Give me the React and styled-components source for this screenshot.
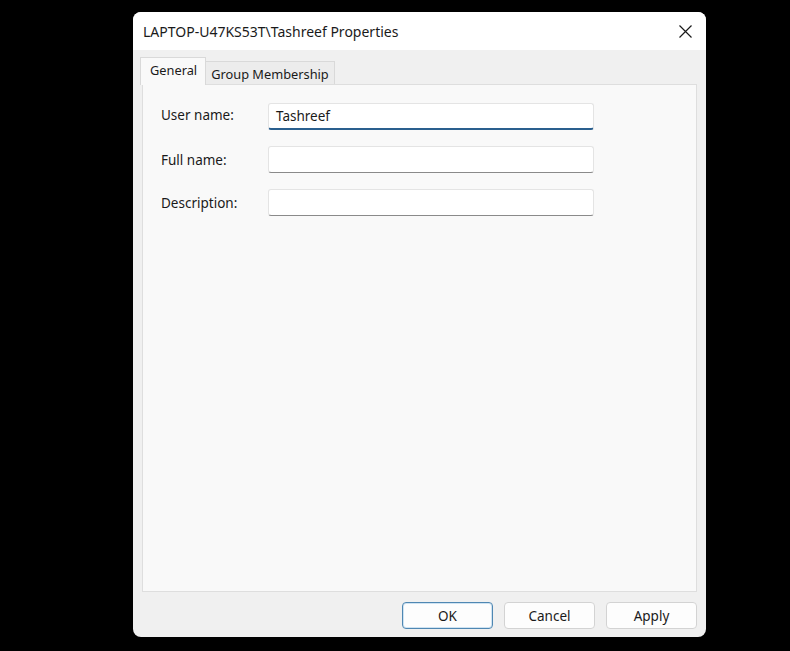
import React from "react";
import styled, { createGlobalStyle } from "styled-components";

const Global = createGlobalStyle`
  html, body { margin: 0; padding: 0; background: #000; }
  body { font-family: "Noto Sans", "Open Sans", sans-serif; color: #1b1b1b; }
  #root { width: 790px; height: 651px; }
`;

const Page = styled.div`
  width: 790px;
  height: 651px;
  background: #000;
  padding: 12px 0 0 133px;
  box-sizing: border-box;
`;

const Window = styled.div`
  width: 573px;
  height: 625px;
  background: #f0f0f0;
  border-radius: 8px;
  overflow: hidden;
  display: flex;
  flex-direction: column;
`;

const TitleBar = styled.div`
  height: 38px;
  background: #ffffff;
  display: flex;
  align-items: center;
  justify-content: space-between;
  padding: 0 0 0 10px;
  box-sizing: border-box;
  font-size: 14px;
  color: #1a1a1a;
`;

const CloseButton = styled.div`
  width: 46px;
  height: 38px;
  display: flex;
  align-items: center;
  justify-content: center;
  margin-right: -2px;
`;

const Body = styled.div`
  flex: 1;
  display: flex;
  flex-direction: column;
  padding: 7px 9px 9px 9px;
`;

const TabRow = styled.div`
  height: 27px;
  display: flex;
  align-items: flex-end;
  margin-left: -2px;
  position: relative;
  z-index: 1;
`;

const Tab = styled.div`
  box-sizing: border-box;
  font-size: 12.8px;
  display: flex;
  align-items: center;
  color: #1a1a1a;
  border: 1px solid #d9d9d9;
  border-bottom: none;
  ${(p) =>
    p.$active
      ? `height: 28px; background: #f9f9f9; padding: 0 8px 4px 9px; margin-bottom: -1px;`
      : `height: 23px; background: #ececec; padding: 1px 5px 0 5px; border-left: none;`}
`;

const Panel = styled.div`
  height: 508px;
  box-sizing: border-box;
  background: #f9f9f9;
  border: 1px solid #dedede;
  padding: 18px 0 0 18px;
  display: flex;
  flex-direction: column;
  gap: 16px;
`;

const FieldRow = styled.div`
  display: flex;
  align-items: center;
  height: 27px;
`;

const Label = styled.div`
  width: 107px;
  font-size: 13.5px;
  color: #1a1a1a;
  margin-top: ${(p) => (p.$first ? "-4px" : "0")};
`;

const Input = styled.div`
  width: 326px;
  height: 27px;
  box-sizing: border-box;
  background: #ffffff;
  border: 1px solid #e4e4e4;
  border-bottom: ${(p) => (p.$focused ? "2px solid #2a5f8e" : "1px solid #8a8a8a")};
  border-radius: 3px;
  padding: 0 0 0 7px;
  font-size: 13.5px;
  display: flex;
  align-items: center;
  color: #1a1a1a;
`;

const ButtonRow = styled.div`
  display: flex;
  justify-content: flex-end;
  gap: 11px;
  margin-top: 10px;
`;

const Button = styled.div`
  width: 91px;
  height: 27px;
  box-sizing: border-box;
  background: #fdfdfd;
  border: 1px solid ${(p) => (p.$default ? "#4f87b2" : "#d3d3d3")};
  box-shadow: ${(p) => (p.$default ? "inset 0 0 0 1px #cfe3f2" : "none")};
  border-radius: 4px;
  font-size: 13.5px;
  display: flex;
  align-items: center;
  justify-content: center;
  color: #1a1a1a;
`;

export default function App() {
  return (
    <>
      <Global />
      <Page>
        <Window>
          <TitleBar>
            <span>LAPTOP-U47KS53T\Tashreef Properties</span>
            <CloseButton>
              <svg width="13" height="13" viewBox="0 0 13 13">
                <path d="M0.5 0.5 L12.5 12.5 M12.5 0.5 L0.5 12.5" stroke="#1a1a1a" strokeWidth="1.2" fill="none" />
              </svg>
            </CloseButton>
          </TitleBar>
          <Body>
            <TabRow>
              <Tab $active>General</Tab>
              <Tab>Group Membership</Tab>
            </TabRow>
            <Panel>
              <FieldRow>
                <Label $first>User name:</Label>
                <Input $focused>Tashreef</Input>
              </FieldRow>
              <FieldRow>
                <Label>Full name:</Label>
                <Input />
              </FieldRow>
              <FieldRow>
                <Label>Description:</Label>
                <Input />
              </FieldRow>
            </Panel>
            <ButtonRow>
              <Button $default>OK</Button>
              <Button>Cancel</Button>
              <Button>Apply</Button>
            </ButtonRow>
          </Body>
        </Window>
      </Page>
    </>
  );
}
